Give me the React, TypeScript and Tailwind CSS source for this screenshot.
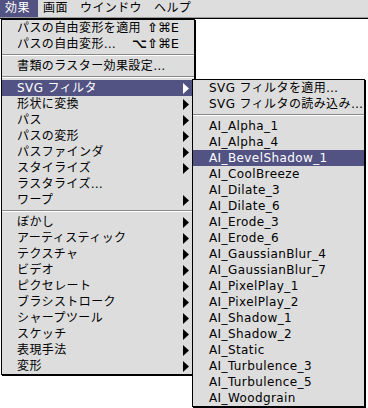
import React from "react";

const FONT = { fontFamily: '"DejaVu Sans", "Noto Sans CJK JP", sans-serif' };

type Item =
  | { sep: true }
  | { label: string; sub?: boolean; key?: string; mod?: string; active?: boolean };

const mainItems: Item[] = [
  { label: "パスの自由変形を適用", mod: "⇧", key: "⌘E" },
  { label: "パスの自由変形…", mod: "⌥⇧", key: "⌘E" },
  { sep: true },
  { label: "書類のラスター効果設定…" },
  { sep: true },
  { label: "SVG フィルタ", sub: true, active: true },
  { label: "形状に変換", sub: true },
  { label: "パス", sub: true },
  { label: "パスの変形", sub: true },
  { label: "パスファインダ", sub: true },
  { label: "スタイライズ", sub: true },
  { label: "ラスタライズ…" },
  { label: "ワープ", sub: true },
  { sep: true },
  { label: "ぼかし", sub: true },
  { label: "アーティスティック", sub: true },
  { label: "テクスチャ", sub: true },
  { label: "ビデオ", sub: true },
  { label: "ピクセレート", sub: true },
  { label: "ブラシストローク", sub: true },
  { label: "シャープツール", sub: true },
  { label: "スケッチ", sub: true },
  { label: "表現手法", sub: true },
  { label: "変形", sub: true },
];

const filters = [
  "AI_Alpha_1",
  "AI_Alpha_4",
  "AI_BevelShadow_1",
  "AI_CoolBreeze",
  "AI_Dilate_3",
  "AI_Dilate_6",
  "AI_Erode_3",
  "AI_Erode_6",
  "AI_GaussianBlur_4",
  "AI_GaussianBlur_7",
  "AI_PixelPlay_1",
  "AI_PixelPlay_2",
  "AI_Shadow_1",
  "AI_Shadow_2",
  "AI_Static",
  "AI_Turbulence_3",
  "AI_Turbulence_5",
  "AI_Woodgrain",
];

const subItems: Item[] = [
  { label: "SVG フィルタを適用…" },
  { label: "SVG フィルタの読み込み…" },
  { sep: true },
  ...filters.map((f) => ({ label: f, active: f === "AI_BevelShadow_1" })),
];

function Arrow({ white }: { white?: boolean }) {
  return (
    <svg width="6" height="11" viewBox="0 0 6 11" className="shrink-0">
      <polygon points="0,0 6,5.5 0,11" fill={white ? "#fff" : "#000"} />
    </svg>
  );
}

function Separator() {
  return (
    <div className="h-[6px] pt-[2px]">
      <div className="h-px bg-[#8a8a8a]" />
      <div className="h-px bg-white" />
    </div>
  );
}

function Row({ item, pl }: { item: Item; pl: string }) {
  if ("sep" in item) return <Separator />;
  return (
    <div
      className={`flex h-[16px] items-center pr-[5px] text-[12px] leading-[16px] tracking-[0.4px] ${pl} ${
        item.active ? "bg-[#525283] text-white" : "text-black"
      }`}
    >
      <span className="flex-1 whitespace-nowrap">{item.label}</span>
      {item.key && (
        <span className="mr-[10px] whitespace-nowrap text-[13px] tracking-normal">
          <span className="font-bold">{item.mod}</span>
          {item.key}
        </span>
      )}
      {item.sub && <Arrow white={item.active} />}
    </div>
  );
}

export default function App() {
  return (
    <div className="relative h-[408px] w-[368px] overflow-hidden bg-white" style={FONT}>
      {/* menu bar */}
      <div className="border-b border-black">
        <div className="flex h-[18px] border-b border-[#999] bg-[#dddddd] text-[12px] leading-[17px] tracking-[0.4px]">
          <div className="w-[38px] bg-[#525283] pl-[5px] text-white">効果</div>
          <div className="w-[37px] pl-[5px]">画面</div>
          <div className="w-[74px] pl-[5px]">ウインドウ</div>
          <div className="pl-[5px]">ヘルプ</div>
        </div>
      </div>

      {/* 効果 menu */}
      <div className="absolute left-[1px] top-[19px] w-[194px] border border-black bg-[#dddddd] shadow-[1px_1px_0_#000]">
        {mainItems.map((it, i) => (
          <Row key={i} item={it} pl="pl-[15px]" />
        ))}
      </div>

      {/* SVG フィルタ submenu */}
      <div className="absolute left-[192px] top-[79px] w-[173px] border border-black bg-[#dddddd] shadow-[1px_1px_0_#000]">
        {subItems.map((it, i) => (
          <Row key={i} item={it} pl="pl-[16px]" />
        ))}
      </div>
    </div>
  );
}
